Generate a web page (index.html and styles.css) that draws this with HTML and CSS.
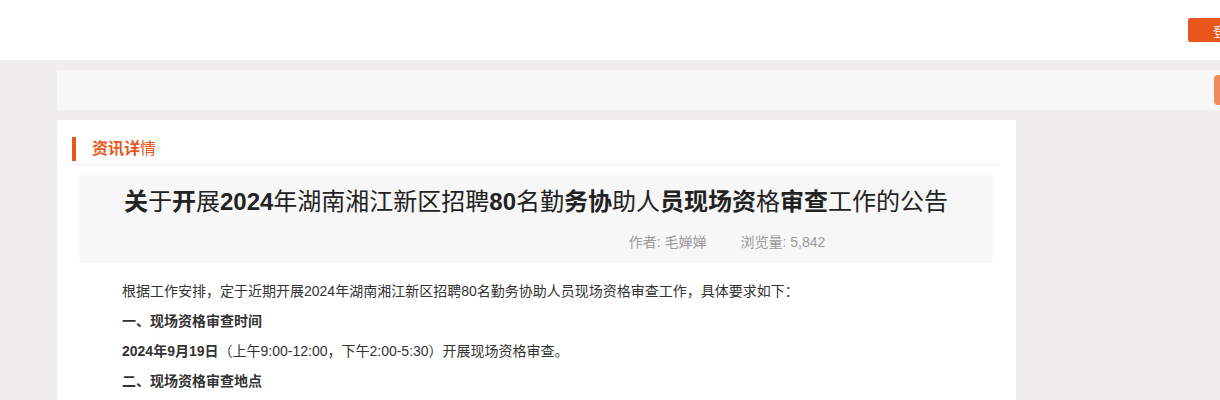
FILE: index.html
```html
<!DOCTYPE html>
<html lang="zh-CN">
<head>
  <meta charset="UTF-8" />
  <meta name="viewport" content="width=device-width, initial-scale=1" />
  <title>资讯详情</title>
  <link rel="stylesheet" href="styles.css">
</head>
<body>
  <div class="header">
    <div class="wrap header-inner">
      <button class="login">登录</button>
    </div>
  </div>

  <div class="page">
    <div class="wrap">
      <div class="searchbar">
        <span class="search-btn"></span>
      </div>

      <div class="card">
        <h3 class="card-title"><span class="b">资讯详</span>情</h3>

        <div class="article-head">
          <h1><span class="b">关</span>于<span class="b">开</span>展<span class="b">2024</span>年湖南湘江新区招聘<span class="b">80</span>名勤<span class="b">务协</span>助人<span class="b">员现场资</span>格<span class="b">审查</span>工作的公告</h1>
          <p class="meta"><span>作者: 毛婵婵</span><span>浏览量: 5,842</span></p>
        </div>

        <div class="article-body">
          <p>根据工作安排，定于近期开展2024年湖南湘江新区招聘80名勤务协助人员现场资格审查工作，具体要求如下：</p>
          <p><strong>一、现场资格审查时间</strong></p>
          <p><strong>2024年9月19日</strong>（上午9:00-12:00，下午2:00-5:30）开展现场资格审查。</p>
          <p><strong>二、现场资格审查地点</strong></p>
        </div>
      </div>
    </div>
  </div>
</body>
</html>
```

FILE: styles.css
```css
html, body { margin: 0; padding: 0; }
body { font-family: "Liberation Sans", "Noto Sans CJK SC", sans-serif; color: #333; background: #efeded; overflow-x: hidden; }
.wrap { width: 1200px; margin-left: 57px; }

.header { background: #fff; height: 60px; }
.header-inner { height: 60px; display: flex; align-items: center; justify-content: flex-end; }
.login { width: 76px; height: 24px; margin-right: -7px; border: 0; border-radius: 2px; background: #e8561a; color: #fff; font-size: 13px; padding: 0; font-family: inherit; }

.page { padding-top: 10px; }
.searchbar { height: 40px; background: #f7f7f7; display: flex; align-items: center; justify-content: flex-end; }
.search-btn { width: 40px; height: 30px; border-radius: 4px; background: #ef8a5a; margin-right: 3px; }

.card { width: 959px; margin-top: 10px; background: #fff; padding: 17px 0 20px; box-sizing: border-box; }
.card-title { margin: 0 16px 0 15px; padding: 0 0 3px 0; font-size: 16px; font-weight: normal; color: #e8561a; line-height: 24px; border-bottom: 1px solid #f0f0f0; }
.card-title::before { content: ""; display: inline-block; width: 4px; height: 24px; background: #e8561a; vertical-align: top; margin-right: 16px; }
.b { font-weight: bold; }

.article-head { margin: 10px 23px 0 22px; background: #f7f7f7; padding: 12px 0 12px; text-align: center; }
.article-head h1 { margin: 0; font-size: 24px; font-weight: normal; line-height: 30px; color: #222; }
.meta { margin: 16px 0 0; font-size: 14px; color: #999; line-height: 18px; padding-left: 382px; }
.meta span + span { margin-left: 34px; }

.article-body { padding: 13px 65px 0; font-size: 14px; line-height: 30px; }
.article-body p { margin: 0; }
```
